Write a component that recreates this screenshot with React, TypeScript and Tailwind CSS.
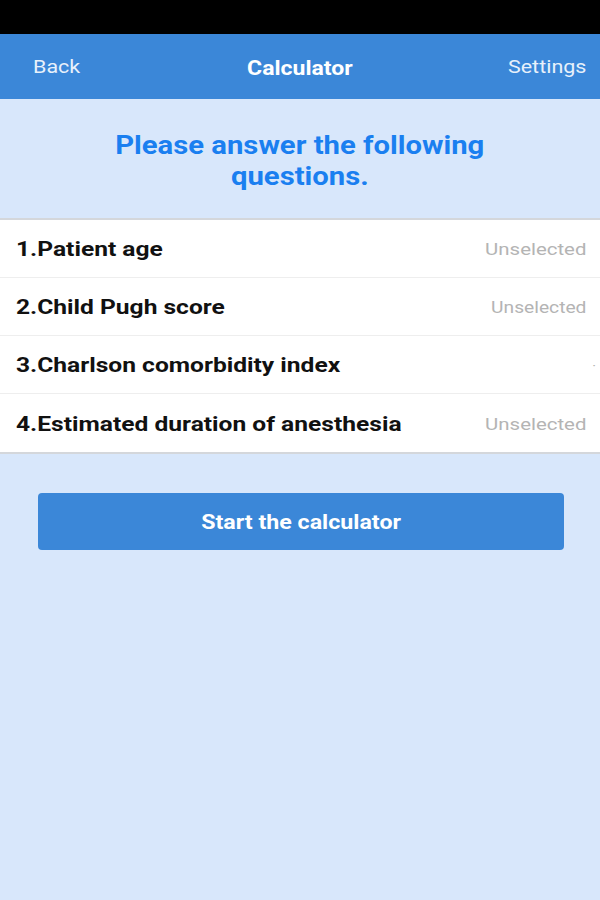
import React from "react";

const rows = [
  { label: "1.Patient age", value: "Unselected", size: "text-[17px]" },
  { label: "2.Child Pugh score", value: "Unselected", size: "text-[16px]" },
  { label: "3.Charlson comorbidity index", value: "·", size: "text-[12px]" },
  { label: "4.Estimated duration of anesthesia", value: "Unselected", size: "text-[17px]" },
];

export default function App() {
  return (
    <div className="w-[600px] h-[900px] flex flex-col bg-[#d8e7fb]" style={{ fontFamily: "Roboto, 'Noto Sans', sans-serif" }}>
      <div className="h-[34px] bg-black" />
      <div className="h-[65px] bg-[#3b87d8] flex items-center justify-between px-[14px] text-white pt-[2px]">
        <span className="w-[100px] pl-[19px]">
          <span className="inline-block text-[19px] text-[#e8f1fb] scale-x-[1.13] origin-left">Back</span>
        </span>
        <span className="inline-block text-[20px] font-bold scale-x-[1.15]">Calculator</span>
        <span className="w-[100px] text-right">
          <span className="inline-block text-[19px] text-[#e8f1fb] scale-x-[1.13] origin-right">Settings</span>
        </span>
      </div>
      <div className="h-[119px] flex flex-col items-center justify-center text-[#1a7ff0] text-[25px] font-bold leading-[31px] pt-[4px]">
        <div className="scale-x-[1.17]">Please answer the following</div>
        <div className="scale-x-[1.17]">questions.</div>
      </div>
      <div className="bg-white border-t-2 border-b-2 border-[#d4d7db]">
        {rows.map((r, i) => (
          <div key={i} className={`h-[58px] flex items-center justify-between pl-[16px] pr-[14px] pt-[3px] ${i < rows.length - 1 ? "border-b border-[#eeeeee]" : ""}`}>
            <span className="inline-block text-[21px] font-bold text-[#111] scale-x-[1.17] origin-left">{r.label}</span>
            <span className={`inline-block ${r.size} text-[#b4b4b4] scale-x-[1.2] origin-right ${i === 2 ? "-mr-[10px]" : ""}`}>{r.value}</span>
          </div>
        ))}
      </div>
      <div className="pl-[38px] pt-[39px]">
        <button className="w-[526px] h-[57px] rounded-[4px] bg-[#3b87d8] text-white">
          <span className="inline-block text-[20px] font-bold scale-x-[1.16]">Start the calculator</span>
        </button>
      </div>
    </div>
  );
}
